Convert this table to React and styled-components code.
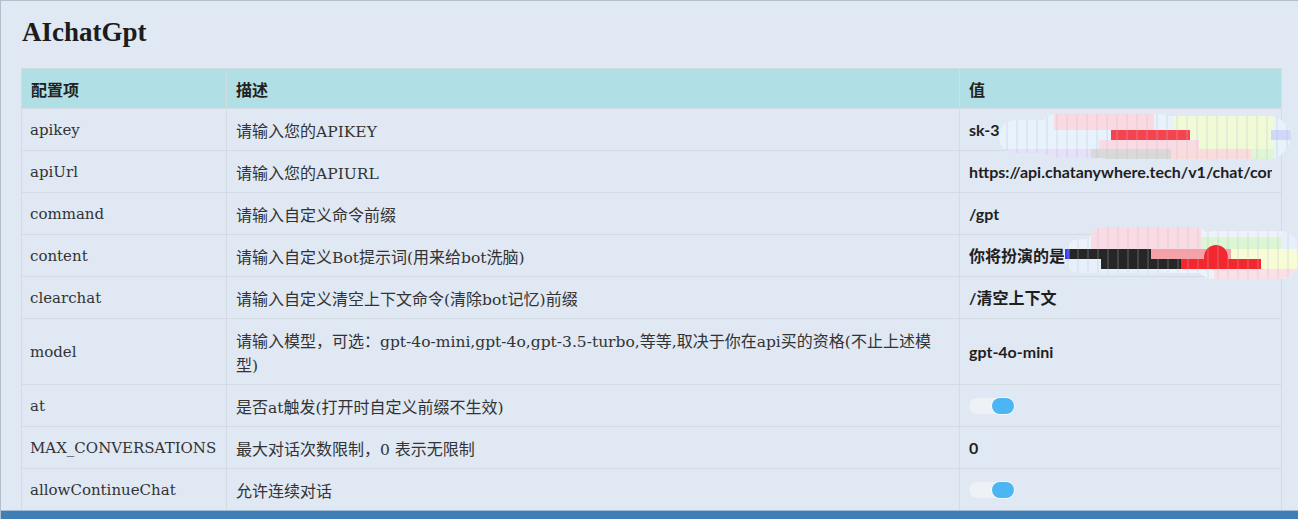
import React from "react";
import styled, { createGlobalStyle } from "styled-components";

const GlobalStyle = createGlobalStyle`
  html, body {
    margin: 0;
    padding: 0;
    background: #dfe8f3;
    overflow: hidden;
  }
  * {
    box-sizing: border-box;
  }
`;

const rows = [
  { key: "apikey", desc: "请输入您的APIKEY", type: "text", value: "sk-3", mask: "key" },
  {
    key: "apiUrl",
    desc: "请输入您的APIURL",
    type: "text",
    value: "https://api.chatanywhere.tech/v1/chat/completions",
  },
  { key: "command", desc: "请输入自定义命令前缀", type: "text", value: "/gpt" },
  {
    key: "content",
    desc: "请输入自定义Bot提示词(用来给bot洗脑)",
    type: "text",
    value: '你将扮演的是"',
    mask: "content",
  },
  {
    key: "clearchat",
    desc: "请输入自定义清空上下文命令(清除bot记忆)前缀",
    type: "text",
    value: "/清空上下文",
  },
  {
    key: "model",
    desc: "请输入模型，可选：gpt-4o-mini,gpt-4o,gpt-3.5-turbo,等等,取决于你在api买的资格(不止上述模型)",
    type: "text",
    value: "gpt-4o-mini",
  },
  { key: "at", desc: "是否at触发(打开时自定义前缀不生效)", type: "switch", value: true },
  { key: "MAX_CONVERSATIONS", desc: "最大对话次数限制，0 表示无限制", type: "text", value: "0" },
  { key: "allowContinueChat", desc: "允许连续对话", type: "switch", value: true },
];

// latin runs get the serif face, the rest falls to the CJK face
const mixed = (text) =>
  text
    .split(/([\u0000-\u024f]+)/)
    .filter(Boolean)
    .map((part, i) =>
      /^[\u0000-\u024f]+$/.test(part) ? <Latin key={i}>{part}</Latin> : part
    );

const KeyMask = () => (
  <MaskSvg width="292" height="45" viewBox="0 0 292 45" style={{ left: 39, top: 5 }}>
    <defs>
      <clipPath id="keyClip">
        <rect x="0" y="6" width="292" height="33" rx="16" />
        <rect x="40" y="0" width="140" height="44" rx="18" />
        <rect x="90" y="2" width="200" height="43" rx="20" />
      </clipPath>
    </defs>
    <g clipPath="url(#keyClip)">
      <rect x="0" y="0" width="292" height="45" fill="#e8f2fc" />
      <rect x="55" y="0" width="100" height="16" fill="#fbd9e3" />
      <rect x="0" y="35" width="92" height="10" fill="#e6e0f8" />
      <rect x="175" y="0" width="100" height="40" fill="#f1fad6" />
      <rect x="100" y="26" width="100" height="9" fill="#fbdbe3" />
      <rect x="112" y="16" width="79" height="10" fill="#f5444f" />
      <rect x="272" y="16" width="20" height="10" fill="#cfd8f8" />
      <rect x="92" y="35" width="80" height="10" fill="#d9d9d9" />
      <rect x="172" y="35" width="80" height="10" fill="#fbdcdc" />
      <rect x="252" y="35" width="23" height="10" fill="#dff7d6" />
      {Array.from({ length: 29 }).map((_, i) => (
        <line key={i} x1={8 + i * 10} y1="0" x2={8 + i * 10} y2="45" stroke="#b8c0cc" strokeOpacity="0.45" />
      ))}
    </g>
  </MaskSvg>
);

const ContentMask = () => (
  <MaskSvg width="235" height="52" viewBox="0 0 235 52" style={{ left: 104, top: -8 }}>
    <defs>
      <clipPath id="contentClip">
        <rect x="0" y="12" width="235" height="34" rx="16" />
        <rect x="25" y="0" width="120" height="30" rx="14" />
        <rect x="130" y="4" width="105" height="48" rx="20" />
      </clipPath>
    </defs>
    <g clipPath="url(#contentClip)">
      <rect x="0" y="0" width="235" height="52" fill="#eef3fb" />
      <rect x="27" y="0" width="110" height="22" fill="#fadbe4" />
      <rect x="137" y="10" width="80" height="12" fill="#dcf6d4" />
      <rect x="217" y="4" width="18" height="18" fill="#e6effa" />
      <rect x="0" y="32" width="100" height="16" fill="#e6f0fb" />
      <rect x="167" y="22" width="68" height="28" fill="#f7fbd6" />
      <rect x="150" y="42" width="85" height="10" fill="#fbe1e7" />
      <rect x="1" y="22" width="5" height="10" fill="#3a3af0" />
      <rect x="6" y="22" width="81" height="10" fill="#262626" />
      <rect x="37" y="32" width="80" height="10" fill="#262626" />
      <rect x="87" y="22" width="80" height="10" fill="#f6a0a8" />
      <rect x="117" y="32" width="80" height="10" fill="#f3282e" />
      <circle cx="152" cy="30" r="12" fill="#f3282e" />
      {Array.from({ length: 24 }).map((_, i) => (
        <line key={i} x1={4 + i * 10} y1="0" x2={4 + i * 10} y2="52" stroke="#b8c0cc" strokeOpacity="0.4" />
      ))}
    </g>
  </MaskSvg>
);

const App = () => {
  return (
    <Page>
      <GlobalStyle />
      <Content>
        <Title>AIchatGpt</Title>
        <ConfigTable>
          <colgroup>
            <col style={{ width: 205 }} />
            <col style={{ width: 733 }} />
            <col style={{ width: 322 }} />
          </colgroup>
          <thead>
            <tr>
              <HeadCell>配置项</HeadCell>
              <HeadCell>描述</HeadCell>
              <HeadCell>值</HeadCell>
            </tr>
          </thead>
          <tbody>
            {rows.map((row) => (
              <tr key={row.key}>
                <KeyCell>{row.key}</KeyCell>
                <Cell>{mixed(row.desc)}</Cell>
                <ValueCell>
                  {row.type === "switch" ? (
                    <Switch $on={row.value}>
                      <Knob />
                    </Switch>
                  ) : (
                    <ValueInput readOnly value={row.value} />
                  )}
                  {row.mask === "key" && <KeyMask />}
                  {row.mask === "content" && <ContentMask />}
                </ValueCell>
              </tr>
            ))}
          </tbody>
        </ConfigTable>
      </Content>
      <Footer />
    </Page>
  );
};

const Page = styled.div`
  height: 519px;
  overflow: hidden;
  border-top: 1px solid #b3bfcc;
  border-left: 1px solid #b3bfcc;
  display: flex;
  flex-direction: column;
`;

const Content = styled.div`
  flex: 1;
  min-height: 0;
  overflow: hidden;
  padding: 15px 16px 0 20px;
`;

const Title = styled.h2`
  margin: 0 0 20px 1px;
  font-family: "Liberation Serif", "Noto Sans CJK SC", serif;
  font-size: 27px;
  line-height: 32px;
  font-weight: bold;
  color: #1c1c1c;
`;

const ConfigTable = styled.table`
  width: 1261px;
  table-layout: fixed;
  border-collapse: collapse;
  font-family: "Noto Sans CJK SC", sans-serif;
  font-size: 16px;
  color: #333;
`;

const HeadCell = styled.th`
  background: #b0dfe5;
  border: 1px solid #d3dbe3;
  text-align: left;
  font-weight: bold;
  color: #222;
  line-height: 24px;
  height: 40px;
  padding: 0 9px;
`;

const Cell = styled.td`
  border: 1px solid #d3dbe3;
  line-height: 24px;
  height: 42px;
  padding: 9px 9px 8px;
  vertical-align: middle;
`;

const KeyCell = styled(Cell)`
  font-family: "DejaVu Serif", serif;
  font-size: 15px;
  padding-left: 8px;
`;

const Latin = styled.span`
  font-family: "DejaVu Serif", serif;
  font-size: 15.5px;
  line-height: 1;
`;

const ValueCell = styled(Cell)`
  position: relative;
`;

const ValueInput = styled.input`
  display: block;
  width: 100%;
  border: none;
  outline: none;
  background: transparent;
  padding: 0;
  font-family: "Lato", "Noto Sans CJK SC", sans-serif;
  font-weight: bold;
  font-size: 16px;
  line-height: 24px;
  height: 24px;
  color: #1e1e1e;
`;

const Switch = styled.div`
  width: 45px;
  height: 16px;
  border-radius: 8px;
  background: #eef1f5;
  display: flex;
  justify-content: ${(p) => (p.$on ? "flex-end" : "flex-start")};
  margin: 4px 0;
`;

const Knob = styled.div`
  width: 22px;
  height: 16px;
  border-radius: 8px;
  background: #4cb5f4;
  box-shadow: 0 0 0 1px rgba(255, 255, 255, 0.6);
`;

const MaskSvg = styled.svg`
  position: absolute;
  pointer-events: none;
`;

const Footer = styled.div`
  flex: none;
  height: 9px;
  background: #3f7fb5;
  border-top: 1px solid #9fbbd6;
`;

export default App;
